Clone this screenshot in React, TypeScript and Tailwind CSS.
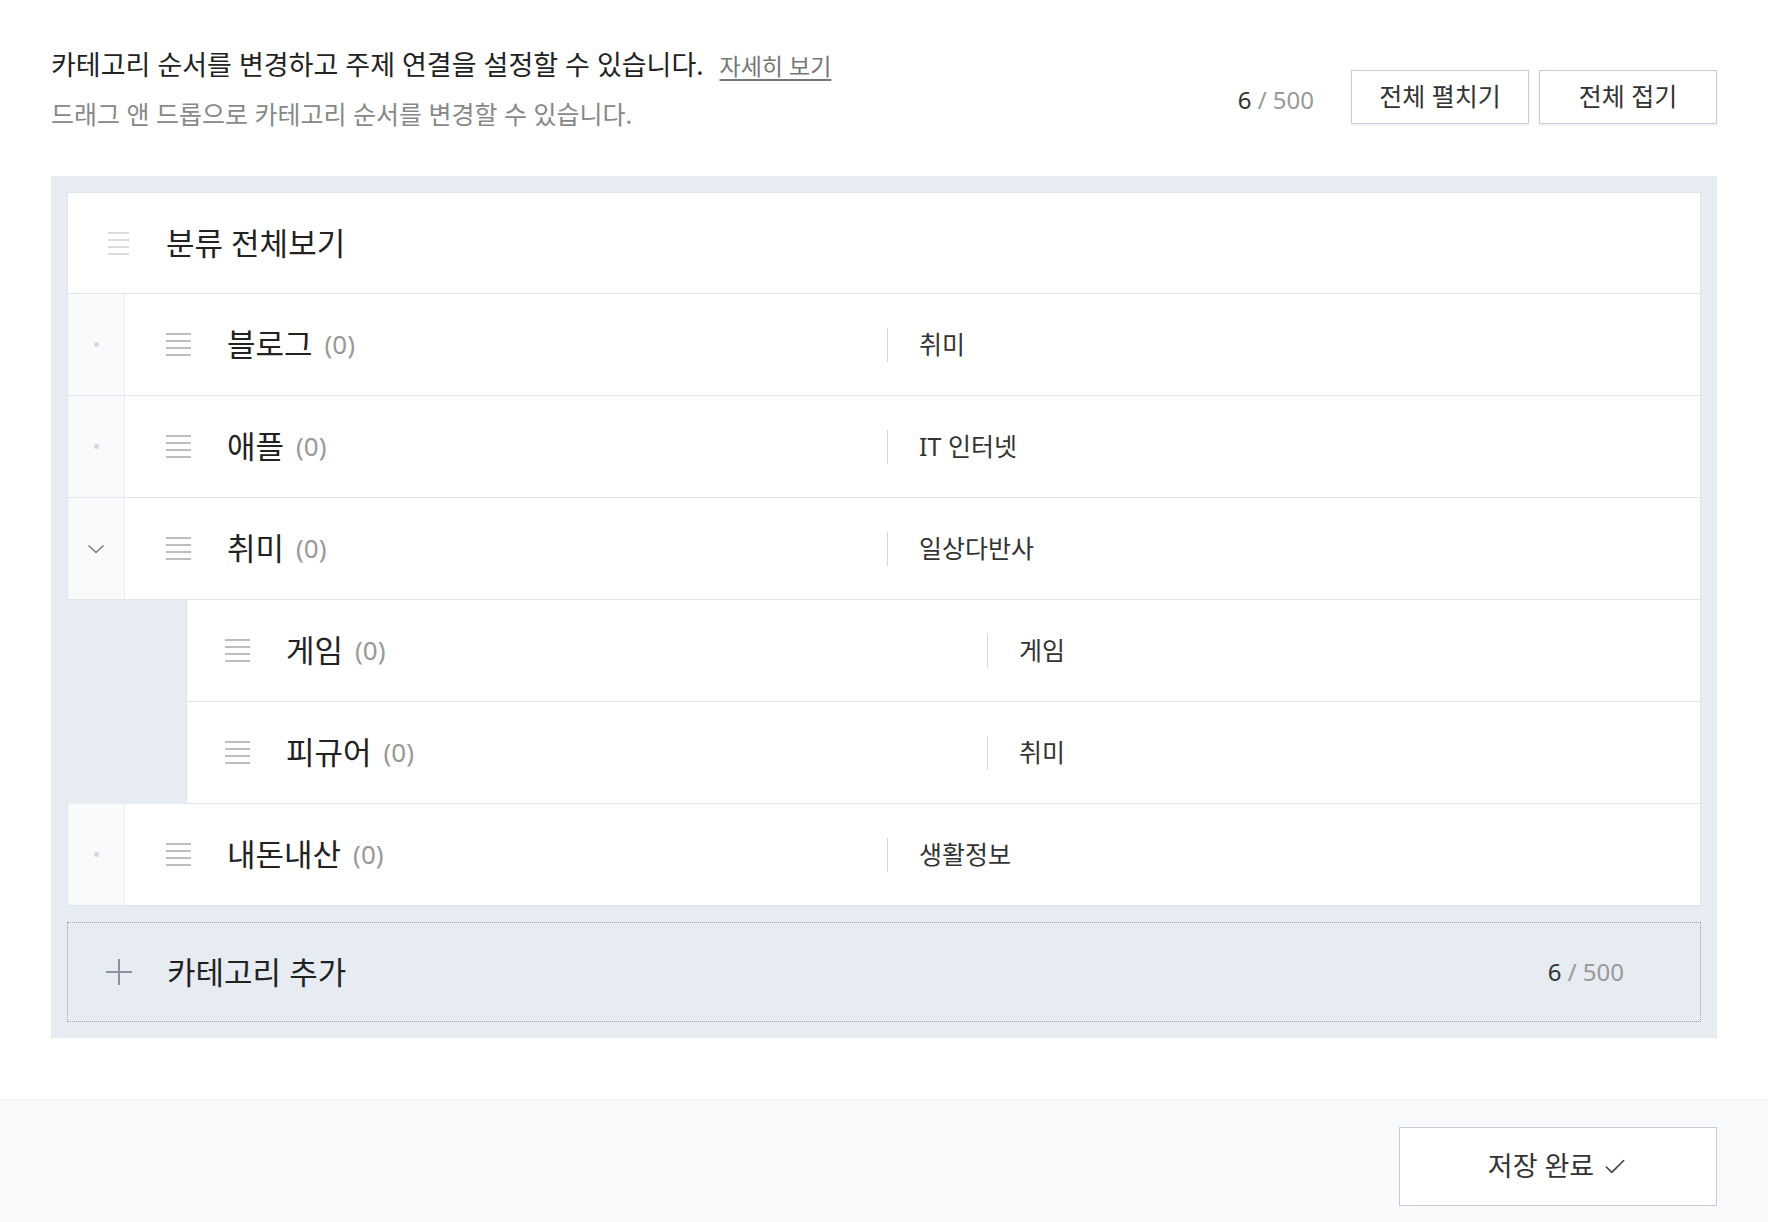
import { Check } from 'lucide-react'

interface Category {
  name: string
  topic: string
  children?: Category[]
  open?: boolean
}

const categories: Category[] = [
  { name: '블로그', topic: '취미' },
  { name: '애플', topic: 'IT 인터넷' },
  {
    name: '취미',
    topic: '일상다반사',
    open: true,
    children: [
      { name: '게임', topic: '게임' },
      { name: '피규어', topic: '취미' },
    ],
  },
  { name: '내돈내산', topic: '생활정보' },
]

function DragHandle({ light }: { light?: boolean }) {
  const color = light ? 'bg-[#dcdcdc]' : 'bg-[#bdbdbd]'
  return (
    <div className={`flex shrink-0 flex-col gap-[5px] ${light ? 'w-[21px]' : 'w-[25px]'}`}>
      {[0, 1, 2, 3].map((i) => (
        <div key={i} className={`h-[2px] w-full ${color}`} />
      ))}
    </div>
  )
}

function Counter() {
  return (
    <span className="text-[24px] text-[#333]">
      6 <span className="text-[#999]">/ 500</span>
    </span>
  )
}

function Name({ name }: { name: string }) {
  return (
    <div className="ml-[36px] flex items-center">
      <span className="text-[31px] text-[#222]">{name}</span>
      <span className="ml-[12px] text-[26px] text-[#999]">(0)</span>
    </div>
  )
}

function Topic({ topic }: { topic: string }) {
  return (
    <div className="flex items-center">
      <div className="h-[34px] w-px bg-[#d3d9e1]" />
      <span className="pl-[31px] text-[25px] text-[#333]">{topic}</span>
    </div>
  )
}

function ParentRow({ item }: { item: Category }) {
  return (
    <div className="flex h-[102px] border-x border-b border-[#dfe4ec] bg-white">
      <div className="flex w-[57px] shrink-0 items-center justify-center border-r border-[#eceff4] bg-[#f9fafc]">
        {item.children ? (
          <svg width="18" height="10" viewBox="0 0 18 10" fill="none">
            <path d="M1.5 1.5 L9 8.5 L16.5 1.5" stroke="#7a7a7a" strokeWidth="1.6" />
          </svg>
        ) : (
          <div className="h-[5px] w-[5px] rounded-full bg-[#d5d8dd]" />
        )}
      </div>
      <div className="flex w-[762px] shrink-0 items-center pl-[41px]">
        <DragHandle />
        <Name name={item.name} />
      </div>
      <Topic topic={item.topic} />
    </div>
  )
}

function ChildRow({ item }: { item: Category }) {
  return (
    <div className="ml-[119px] flex h-[102px] border-x border-b border-[#dfe4ec] bg-white">
      <div className="flex w-[800px] shrink-0 items-center pl-[38px]">
        <DragHandle />
        <Name name={item.name} />
      </div>
      <Topic topic={item.topic} />
    </div>
  )
}

export default function App() {
  return (
    <div className="flex min-h-screen flex-col bg-white font-['Noto_Sans','Noto_Sans_CJK_KR',sans-serif]">
      <div className="flex items-start justify-between px-[51px] pt-[41px]">
        <div>
          <p className="text-[27px] leading-[48px] text-[#222]">
            카테고리 순서를 변경하고 주제 연결을 설정할 수 있습니다.
            <a className="ml-[16px] text-[23px] text-[#777] underline underline-offset-4">자세히 보기</a>
          </p>
          <p className="text-[25px] leading-[48px] text-[#888]">
            드래그 앤 드롭으로 카테고리 순서를 변경할 수 있습니다.
          </p>
        </div>
        <div className="mt-[29px] flex items-center">
          <div className="mt-[6px]">
            <Counter />
          </div>
          <div className="ml-[37px] flex gap-[10px]">
            <button className="h-[54px] w-[178px] border border-[#c4cdd8] bg-white text-[25px] text-[#333] shadow-[0_2px_2px_rgba(0,0,0,0.06)]">
              전체 펼치기
            </button>
            <button className="h-[54px] w-[178px] border border-[#c4cdd8] bg-white text-[25px] text-[#333] shadow-[0_2px_2px_rgba(0,0,0,0.06)]">
              전체 접기
            </button>
          </div>
        </div>
      </div>

      <div className="mx-[51px] mt-[38px] bg-[#e7ebf2] p-[16px]">
        <div className="flex h-[102px] items-center border border-[#dfe4ec] bg-white pl-[40px]">
          <DragHandle light />
          <span className="ml-[37px] text-[31px] text-[#222]">분류 전체보기</span>
        </div>
        {categories.map((c) => (
          <div key={c.name}>
            <ParentRow item={c} />
            {c.open && c.children?.map((ch) => <ChildRow key={ch.name} item={ch} />)}
          </div>
        ))}
        <div className="mt-[16px] flex h-[100px] items-center justify-between border border-dotted border-[#99a1ac] pl-[37px] pr-[76px]">
          <div className="flex items-center">
            <svg width="28" height="28" viewBox="0 0 28 28">
              <path d="M14 1 V27 M1 14 H27" stroke="#8a929e" strokeWidth="2" />
            </svg>
            <span className="ml-[34px] text-[31px] text-[#222]">카테고리 추가</span>
          </div>
          <Counter />
        </div>
      </div>

      <div className="mt-[61px] flex flex-1 justify-end border-t border-[#eef0f3] bg-[#f9fafb] px-[51px] pt-[27px] pb-[20px]">
        <button className="flex h-[79px] w-[318px] items-center justify-center gap-[8px] border border-[#c4cdd8] bg-white text-[27px] text-[#333]">
          저장 완료
          <Check className="h-[26px] w-[26px] text-[#444]" strokeWidth={1.5} />
        </button>
      </div>
    </div>
  )
}
